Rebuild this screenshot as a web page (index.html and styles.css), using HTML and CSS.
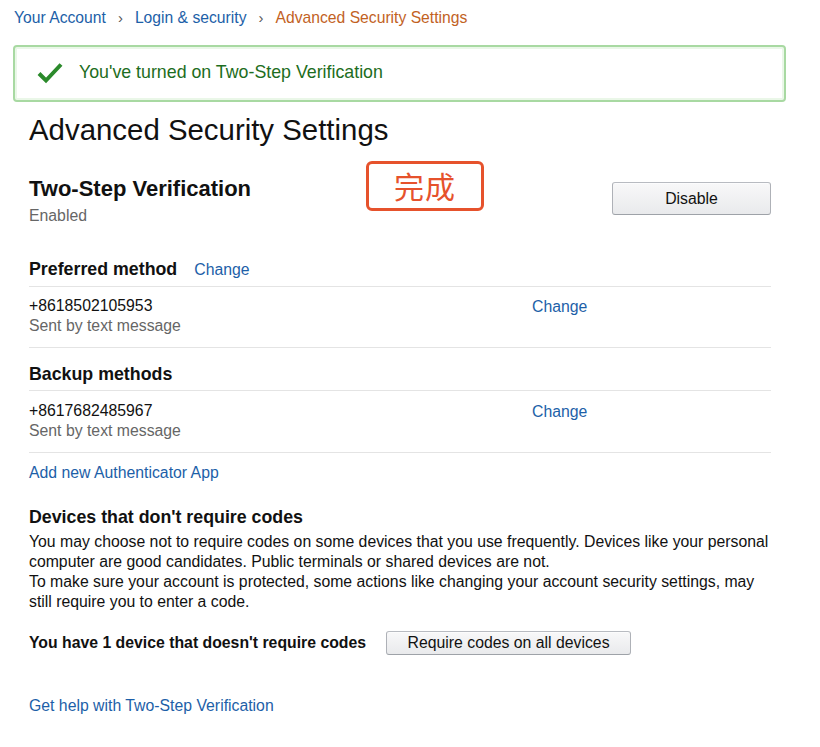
FILE: index.html
```html
<!DOCTYPE html>
<html lang="en">
<head>
<meta charset="utf-8">
<title>Advanced Security Settings</title>
<link rel="stylesheet" href="styles.css">
</head>
<body>
<div class="page">
  <nav class="breadcrumb">
    <a class="crumb" href="#">Your Account</a>
    <span class="sep">›</span>
    <a class="crumb" href="#">Login &amp; security</a>
    <span class="sep">›</span>
    <span class="crumb current">Advanced Security Settings</span>
  </nav>

  <div class="alert">
    <svg class="check" width="26" height="22" viewBox="0 0 26 22" aria-hidden="true">
      <path d="M2 11.5 L9 18.5 L24 2.5" fill="none" stroke="#2b8a2b" stroke-width="4" stroke-linecap="butt" stroke-linejoin="miter"/>
    </svg>
    <span class="alert-text">You've turned on Two-Step Verification</span>
  </div>

  <main class="content">
    <h1 class="title">Advanced Security Settings</h1>

    <section class="tsv">
      <div class="tsv-info">
        <h2 class="tsv-title">Two-Step Verification</h2>
        <div class="muted">Enabled</div>
      </div>
      <div class="badge">完成</div>
      <button class="btn btn-disable">Disable</button>
    </section>

    <div class="section-head first">
      <h3 class="sub">Preferred method</h3>
      <a class="link" href="#">Change</a>
    </div>
    <div class="method">
      <div>
        <div class="phone">+8618502105953</div>
        <div class="muted">Sent by text message</div>
      </div>
      <a class="link" href="#">Change</a>
    </div>

    <div class="section-head backup">
      <h3 class="sub">Backup methods</h3>
    </div>
    <div class="method second">
      <div>
        <div class="phone">+8617682485967</div>
        <div class="muted">Sent by text message</div>
      </div>
      <a class="link" href="#">Change</a>
    </div>

    <a class="link add-app" href="#">Add new Authenticator App</a>

    <section class="devices">
      <h3 class="sub">Devices that don't require codes</h3>
      <p class="para">You may choose not to require codes on some devices that you use frequently. Devices like your personal computer are good candidates. Public terminals or shared devices are not.<br>To make sure your account is protected, some actions like changing your account security settings, may still require you to enter a code.</p>
      <div class="device-row">
        <strong class="device-count">You have 1 device that doesn't require codes</strong>
        <button class="btn btn-require">Require codes on all devices</button>
      </div>
    </section>

    <a class="link help" href="#">Get help with Two-Step Verification</a>
  </main>
</div>
</body>
</html>
```

FILE: styles.css
```css
* { box-sizing: border-box; }

html, body {
  margin: 0;
  padding: 0;
  background: #ffffff;
}

body {
  font-family: "Liberation Sans", Arial, Helvetica, sans-serif;
  font-size: 15.8px;
  line-height: 20px;
  color: #111111;
}

a { text-decoration: none; }

.page {
  width: 820px;
  padding: 8px 0 0 0;
}

/* breadcrumb */
.breadcrumb {
  display: flex;
  align-items: center;
  padding-left: 14px;
  height: 20px;
  font-size: 15.7px;
}
.crumb { color: #1d5fa8; }
.crumb.current { color: #c2621f; }
.sep {
  color: #555;
  font-size: 15px;
  padding: 0 12px 0 12px;
}

/* alert */
.alert {
  margin: 17px 0 0 13px;
  width: 773px;
  height: 57px;
  border: 2px solid #a8d9a2;
  border-radius: 4px;
  box-shadow: inset 0 0 0 2px #eaf7e8;
  display: flex;
  align-items: center;
  padding-left: 22px;
  padding-bottom: 3px;
}
.check { flex: 0 0 auto; margin-top: 2px; }
.alert-text {
  margin-left: 16px;
  font-size: 17.8px;
  color: #1d6d21;
}

/* content */
.content {
  padding-left: 29px;
  width: 771px;
}

.title {
  margin: 11px 0 0 0;
  font-size: 29.4px;
  line-height: 34px;
  font-weight: normal;
  color: #111;
}

.tsv {
  display: flex;
  align-items: flex-start;
  margin-top: 14px;
}
.tsv-info { width: 337px; padding-top: 15px; }
.tsv-title {
  margin: 0 0 4px 0;
  font-size: 22px;
  line-height: 26px;
  font-weight: bold;
}
.muted { color: #666666; }

.badge {
  width: 118px;
  height: 50px;
  border: 3px solid #e6522c;
  border-radius: 6px;
  color: #e6522c;
  font-family: "Noto Sans CJK SC", "Noto Sans CJK JP", sans-serif;
  font-size: 30px;
  line-height: 42px;
  text-align: center;
  letter-spacing: 1px;
}

.btn {
  font-family: "Liberation Sans", Arial, Helvetica, sans-serif;
  color: #111;
  background: linear-gradient(#f8f8f9, #e9eaec);
  border: 1px solid #adb1b8;
  border-color: #b8bbc1 #aeb1b7 #9ea2a8;
  border-radius: 3px;
  box-shadow: 0 1px 0 rgba(255,255,255,0.6) inset;
  padding: 0;
  cursor: pointer;
}
.btn-disable {
  margin-left: auto;
  margin-top: 21px;
  width: 159px;
  height: 33px;
  font-size: 15.8px;
}

.section-head {
  display: flex;
  align-items: baseline;
  gap: 17px;
  padding-bottom: 6px;
  border-bottom: 1px solid #e4e4e4;
}
.section-head.first { margin-top: 33px; }
.section-head.backup { margin-top: 16px; }
.sub {
  margin: 0;
  font-size: 17.8px;
  line-height: 20px;
  font-weight: bold;
}
.link { color: #1d5fa8; }
.section-head .link { font-size: 15.8px; }

.method {
  display: grid;
  grid-template-columns: 503px auto;
  align-items: start;
  padding: 9px 0 11px 0;
  border-bottom: 1px solid #e4e4e4;
}
.method.second { padding-top: 10px; }
.method .link { padding-top: 1px; }

.add-app {
  display: block;
  margin-top: 10px;
  width: max-content;
}

.devices { margin-top: 23px; }
.devices .sub { line-height: 22px; }
.para {
  margin: 4px 0 0 0;
  font-size: 15.8px;
  line-height: 20px;
  width: 752px;
}

.device-row {
  display: flex;
  align-items: center;
  margin-top: 19px;
  height: 23px;
}
.device-count {
  font-size: 15.8px;
  font-weight: bold;
}
.btn-require {
  margin-left: 20px;
  width: 245px;
  height: 24px;
  font-size: 15.8px;
}

.help {
  display: block;
  margin-top: 42px;
  width: max-content;
}
```
